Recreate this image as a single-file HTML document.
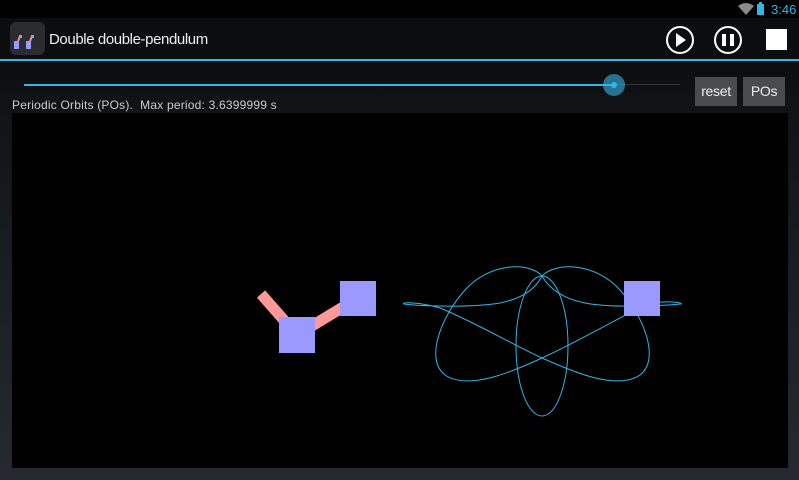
<!DOCTYPE html>
<html><head><meta charset="utf-8"><style>
html,body{margin:0;padding:0}
body{width:799px;height:480px;overflow:hidden;position:relative;background:linear-gradient(#0c0d0f 60px,#121417 120px,#262a30 480px);font-family:"Liberation Sans",sans-serif}
.abs{position:absolute}
.btn{position:absolute;top:77px;height:29px;background:#4a4b4d;color:#eee;font-size:14px;line-height:29px;text-align:center;letter-spacing:-0.3px}
</style></head><body>
<div class="abs" style="left:0;top:0;width:799px;height:18px;background:#000"></div>
<svg class="abs" style="left:738px;top:3px" width="16" height="12" viewBox="0 0 16 12"><path d="M0 3 Q8 -3 16 3 L8 12 Z" fill="#8a8a8a"/></svg>
<div class="abs" style="left:757px;top:4px;width:7px;height:11px;background:#33b5e5"></div>
<div class="abs" style="left:759px;top:2px;width:3px;height:2px;background:#33b5e5"></div>
<div class="abs" style="left:771px;top:2px;font-size:13px;color:#33b5e5">3:46</div>
<div class="abs" style="left:0;top:18px;width:799px;height:41px;background:#0c0d0f"></div>
<div class="abs" style="left:10px;top:22px;width:35px;height:33px;border-radius:6px;background:#2a2c2f"></div>
<svg class="abs" style="left:10px;top:22px" width="35" height="33"><path d="M7 22 L10 14 M19 22 L22 14" stroke="#f88" stroke-width="2"/><rect x="4" y="19" width="5" height="8" fill="#99f"/><rect x="9" y="13" width="3" height="3" fill="#99f"/><rect x="16" y="19" width="5" height="8" fill="#99f"/><rect x="21" y="13" width="3" height="3" fill="#99f"/></svg>
<div class="abs" style="left:49px;top:31px;font-size:15px;color:#eee;letter-spacing:-0.4px">Double double-pendulum</div>
<svg class="abs" style="left:660px;top:22px" width="130" height="36">
<circle cx="20" cy="18" r="13" fill="none" stroke="#fff" stroke-width="2"/><path d="M16 11 L26 18 L16 25 Z" fill="#fff"/>
<circle cx="68" cy="18" r="13" fill="none" stroke="#fff" stroke-width="2"/><rect x="62" y="12" width="4" height="12" fill="#fff"/><rect x="70" y="12" width="4" height="12" fill="#fff"/>
<rect x="106" y="7" width="21" height="21" fill="#fff"/></svg>
<div class="abs" style="left:0;top:59px;width:799px;height:2px;background:#33b5e5"></div>
<div class="abs" style="left:24px;top:84px;width:656px;height:1px;background:#333"></div>
<div class="abs" style="left:24px;top:84px;width:590px;height:2px;background:#33b5e5"></div>
<div class="abs" style="left:603px;top:74px;width:22px;height:22px;border-radius:50%;background:rgba(51,181,229,0.6)"></div>
<div class="abs" style="left:611px;top:82px;width:6px;height:6px;border-radius:50%;background:#33b5e5"></div>
<div class="btn" style="left:695px;width:42px">reset</div>
<div class="btn" style="left:743px;width:42px">POs</div>
<div class="abs" style="left:12px;top:98px;font-size:12px;color:#ccc;letter-spacing:0.2px">Periodic Orbits (POs).&nbsp; Max period: 3.6399999 s</div>
<div class="abs" style="left:12px;top:113px;width:776px;height:355px;background:#000"></div>
<svg class="abs" style="left:0;top:0" width="799" height="480">
<g fill="none" stroke="#33b5e5" stroke-width="1">
<ellipse cx="542" cy="346" rx="26" ry="70"/>
<path d="M542 276 C530 262 490 262 465 290 C440 318 425 360 445 375 C470 392 520 368 542 358 C575 343 615 320 645 305 C660 300 683 302 681 304 C660 306 610 308 585 303 C565 299 550 290 542 276 C555 262 595 262 620 290 C645 318 660 360 640 375 C615 392 565 368 542 358 C510 343 470 320 440 308 C420 302 400 302 404 304 C420 306 470 308 500 303 C520 299 535 290 542 276 Z"/>
</g>
<path d="M261 294 L297 335 L358 298" stroke="#ff9999" stroke-width="11" fill="none"/>
<rect x="279" y="317" width="36" height="36" fill="#9999ff"/>
<rect x="340" y="281" width="36" height="35" fill="#9999ff"/>
<rect x="624" y="281" width="36" height="35" fill="#9999ff"/>
</svg>
</body></html>
